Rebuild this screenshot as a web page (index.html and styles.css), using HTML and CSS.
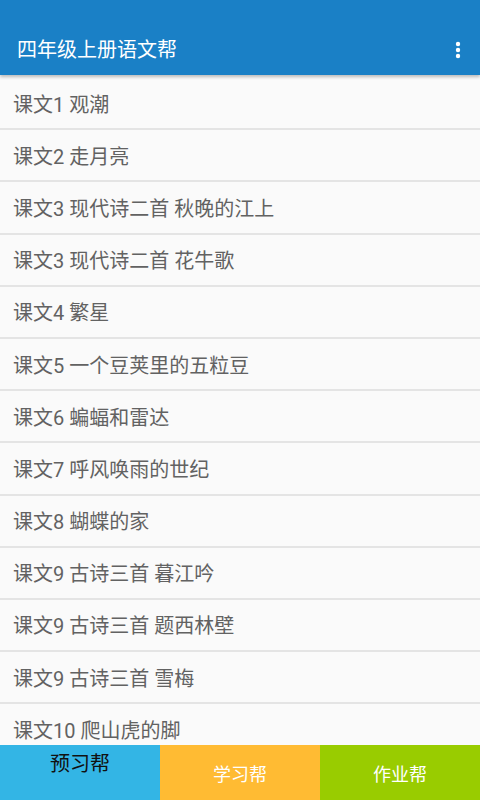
FILE: index.html
```html
<!DOCTYPE html>
<html lang="zh-CN">
<head>
    <meta charset="UTF-8">
    <meta name="viewport" content="width=device-width, initial-scale=1.0">
    <title>四年级上册语文帮</title>
    <link rel="stylesheet" href="styles.css">
</head>
<body>
    <header class="appbar">
        <div class="statusbar"></div>
        <div class="toolbar">
            <h1 class="title">四年级上册语文帮</h1>
            <svg class="menu" width="6" height="18" viewBox="0 0 6 18">
                <circle cx="3" cy="3" r="2.2" fill="#fff"/>
                <circle cx="3" cy="9" r="2.2" fill="#fff"/>
                <circle cx="3" cy="15" r="2.2" fill="#fff"/>
            </svg>
        </div>
    </header>
    <ul class="lessons">
        <li>课文1 观潮</li>
        <li>课文2 走月亮</li>
        <li>课文3 现代诗二首 秋晚的江上</li>
        <li>课文3 现代诗二首 花牛歌</li>
        <li>课文4 繁星</li>
        <li>课文5 一个豆荚里的五粒豆</li>
        <li>课文6 蝙蝠和雷达</li>
        <li>课文7 呼风唤雨的世纪</li>
        <li>课文8 蝴蝶的家</li>
        <li>课文9 古诗三首 暮江吟</li>
        <li>课文9 古诗三首 题西林壁</li>
        <li>课文9 古诗三首 雪梅</li>
        <li>课文10 爬山虎的脚</li>
    </ul>
    <nav class="tabs">
        <div class="tab tab-preview active">预习帮</div>
        <div class="tab tab-study">学习帮</div>
        <div class="tab tab-homework">作业帮</div>
    </nav>
</body>
</html>
```

FILE: styles.css
```css
body {
    font-family: Roboto, "Noto Sans CJK SC", sans-serif;
    margin: 0;
    padding: 0;
    width: 480px;
    height: 800px;
    display: flex;
    flex-direction: column;
    overflow: hidden;
    background: #fafafa;
}
.appbar {
    background-color: #1a80c6;
    box-shadow: 0 2px 3px rgba(0, 0, 0, 0.25);
    position: relative;
    z-index: 2;
    flex-shrink: 0;
}
.statusbar {
    height: 25px;
}
.toolbar {
    height: 50px;
    display: flex;
    align-items: center;
    justify-content: space-between;
    padding: 0 19px 0 17px;
}
.title {
    margin: 0;
    color: #fff;
    font-size: 20px;
    font-weight: normal;
    line-height: 1;
}
.menu {
    display: block;
}
.lessons {
    list-style: none;
    margin: 0;
    padding: 3px 0 0;
    flex: 1;
    overflow: hidden;
}
.lessons li {
    height: 50.2px;
    border-bottom: 2px solid #e4e4e4;
    display: flex;
    align-items: center;
    padding-left: 13px;
    font-size: 20px;
    color: #626262;
}
.tabs {
    height: 55px;
    display: flex;
    flex-shrink: 0;
}
.tab {
    flex: 1;
    display: flex;
    justify-content: center;
    align-items: center;
    color: #fff;
    font-size: 18px;
}
.tab-preview {
    background-color: #33b5e5;
}
.tab-study {
    background-color: #ffbb33;
}
.tab-homework {
    background-color: #99cc00;
}
.tab.active {
    color: #111;
    font-size: 20px;
    align-items: flex-start;
    padding-top: 3px;
}
```
